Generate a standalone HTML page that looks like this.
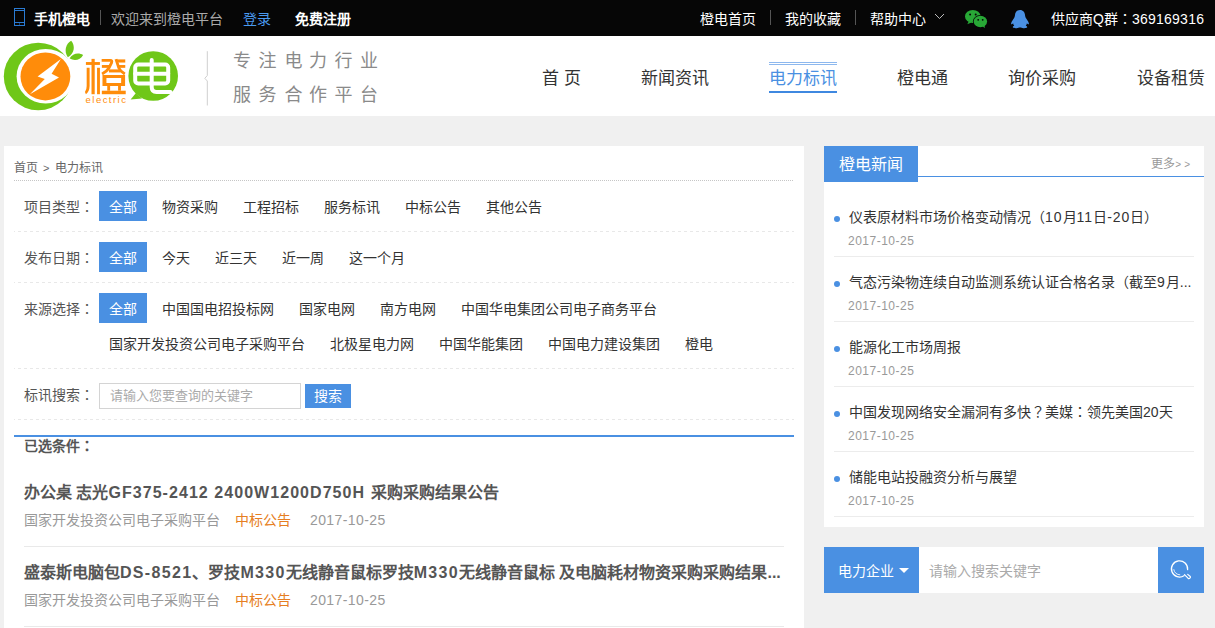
<!DOCTYPE html>
<html lang="zh-CN">
<head>
<meta charset="utf-8">
<title>电力标讯 - 橙电平台</title>
<style>
*{margin:0;padding:0;box-sizing:border-box;}
html,body{width:1215px;height:628px;overflow:hidden;background:#f0f0f0;}
body{font-family:"Liberation Sans",sans-serif;font-size:14px;color:#333;position:relative;}
a{text-decoration:none;color:inherit;}
ul{list-style:none;}
.abs{position:absolute;white-space:nowrap;}

/* top bar */
#topbar{position:absolute;left:0;top:0;width:1215px;height:36px;background:#060606;color:#fff;font-size:14px;line-height:38px;overflow:hidden;}
#topbar .abs{top:0;height:36px;}
#topbar .sep{position:absolute;top:10px;width:1px;height:15px;background:#555;}

/* header */
#header{position:absolute;left:0;top:36px;width:1215px;height:80px;background:#fff;}
#nav a{position:absolute;top:28px;height:30px;line-height:30px;font-size:17px;color:#333;white-space:nowrap;}
#nav a.on{color:#4a90e2;}
#nav .tline{position:absolute;left:769px;top:26px;width:68px;height:3px;border-top:1px solid #8db8ee;border-bottom:1px solid #8db8ee;}
#nav .bline{position:absolute;left:769px;top:55px;width:68px;height:2px;background:#3f88e0;}

/* left panel */
#left{position:absolute;left:4px;top:146px;width:800px;height:482px;background:#fff;}
#crumb{position:absolute;left:10px;top:13px;font-size:12px;line-height:18px;color:#666;white-space:nowrap;}
#crumbline{position:absolute;left:10px;top:34px;width:780px;height:1px;background:repeating-linear-gradient(90deg,#c6c6c6 0,#c6c6c6 1px,transparent 1px,transparent 2px);}
.frow{position:absolute;left:10px;width:780px;}
.frow:after{content:"";position:absolute;left:0;bottom:0;width:780px;height:1px;background:repeating-linear-gradient(90deg,#e8e8e8 0,#e8e8e8 3px,transparent 3px,transparent 6px);background-position:4px 0;}
.frow .lab{position:absolute;left:10px;top:10px;height:30px;line-height:32px;font-size:14px;color:#555;white-space:nowrap;}
.frow .it{position:absolute;height:30px;line-height:32px;font-size:14px;color:#333;white-space:nowrap;}
.frow .it.on{background:#4a90e2;color:#fff;width:48px;text-align:center;}
#kw{position:absolute;left:85px;top:14px;width:202px;height:26px;border:1px solid #d4d4d4;background:#fff;font-size:13px;line-height:24px;color:#aaa;padding-left:10px;white-space:nowrap;}
#kwbtn{position:absolute;left:291px;top:15px;width:46px;height:24px;background:#4a90e2;color:#fff;font-size:14px;line-height:24px;text-align:center;}
#blueline{position:absolute;left:10px;top:289px;width:780px;height:2px;background:#4a90e2;}
#chosen{position:absolute;left:20px;top:290px;font-size:14px;font-weight:bold;color:#555;line-height:20px;white-space:nowrap;}
.item{position:absolute;left:20px;width:760px;height:80px;border-bottom:1px solid #e9e9e9;}
.item .t{position:absolute;left:0;top:14px;font-size:16px;font-weight:bold;color:#555;line-height:24px;white-space:nowrap;}
.item .m{position:absolute;left:0;top:43px;font-size:14px;color:#999;line-height:20px;white-space:nowrap;}
.item .t .l{letter-spacing:1.05px;}
.item .t2 .l{letter-spacing:1.32px;}
.nitem .t .l{letter-spacing:1px;}
.item .m .d{letter-spacing:.4px;}
.nitem .d{letter-spacing:.5px;}
.item .m .c{color:#e67e22;margin-left:15px;}
.item .m .d{margin-left:19px;}

/* right panel */
#news{position:absolute;left:824px;top:146px;width:380px;height:381px;background:#fff;}
#news .hd{position:absolute;left:0;top:0;width:94px;height:36px;background:#4a90e2;color:#fff;font-size:16px;line-height:38px;text-align:center;}
#news .hl{position:absolute;left:94px;top:30px;width:286px;height:1px;background:#4a90e2;}
#news .more{position:absolute;right:11px;top:9px;font-size:12px;line-height:18px;color:#999;white-space:nowrap;}
.nitem{position:absolute;left:10px;width:360px;height:65px;border-bottom:1px solid #ececec;}
.nitem i{position:absolute;left:0px;top:24px;width:6px;height:6px;border-radius:50%;background:#4a90e2;}
.nitem .t{position:absolute;left:15px;top:14px;font-size:14px;line-height:22px;color:#333;white-space:nowrap;}
.nitem .d{position:absolute;left:14px;top:40px;font-size:12px;line-height:18px;color:#999;white-space:nowrap;}

#rsearch{position:absolute;left:824px;top:547px;width:380px;height:46px;background:#fff;}
#rsearch .sel{position:absolute;left:0;top:0;width:95px;height:46px;background:#4a90e2;color:#fff;font-size:14px;line-height:48px;padding-left:14px;white-space:nowrap;}
#rsearch .tri{position:absolute;left:75px;top:21px;width:0;height:0;border-left:5px solid transparent;border-right:5px solid transparent;border-top:5px solid #fff;}
#rsearch .ph{position:absolute;left:105px;top:0;font-size:14px;line-height:48px;color:#aaa;white-space:nowrap;}
#rsearch .btn{position:absolute;right:0;top:0;width:46px;height:46px;background:#4a90e2;}
</style>
</head>
<body>

<div id="topbar">
  <svg class="abs" style="left:13px;top:7px;width:14px;height:20px" viewBox="0 0 14 20"><rect x="1.5" y="1.5" width="10" height="17" fill="none" stroke="#2a7bd3" stroke-width="1"/><line x1="1.5" y1="3.5" x2="11.5" y2="3.5" stroke="#2a7bd3" stroke-width="1"/><line x1="1.5" y1="15.5" x2="11.5" y2="15.5" stroke="#2a7bd3" stroke-width="1"/><rect x="6" y="16.5" width="1" height="1" fill="#2a7bd3"/></svg>
  <a class="abs" style="left:34px;font-weight:bold">手机橙电</a>
  <span class="sep" style="left:100px"></span>
  <span class="abs" style="left:111px;color:#aaa">欢迎来到橙电平台</span>
  <a class="abs" style="left:243px;color:#4a9af0">登录</a>
  <a class="abs" style="left:295px;font-weight:bold">免费注册</a>
  <a class="abs" style="left:700px">橙电首页</a>
  <span class="sep" style="left:770px"></span>
  <a class="abs" style="left:785px">我的收藏</a>
  <span class="sep" style="left:855px"></span>
  <a class="abs" style="left:870px">帮助中心</a>
  <svg class="abs" style="left:934px;top:13px;width:12px;height:8px" viewBox="0 0 12 8"><path d="M1 1 L5.5 5.5 L10 1" fill="none" stroke="#bbb" stroke-width="1"/></svg>
  <svg class="abs" style="left:955px;top:4px;width:84px;height:28px" viewBox="955 4 84 28">
    <ellipse cx="972.8" cy="16.4" rx="7.8" ry="6.5" fill="#28a836"/>
    <path d="M968.8 21.3 L967.3 24.3 L971.5 22.6 Z" fill="#28a836"/>
    <ellipse cx="980.4" cy="21.5" rx="7.5" ry="6.5" fill="#060606"/>
    <ellipse cx="980.4" cy="21.5" rx="6.7" ry="5.7" fill="#28a836"/>
    <path d="M982.5 26.6 L984.9 28 L984.6 25.6 Z" fill="#28a836"/>
    <circle cx="970.1" cy="14.4" r="1" fill="#060606"/><circle cx="975.7" cy="14.4" r="1" fill="#060606"/>
    <circle cx="978.2" cy="19.8" r="0.9" fill="#060606"/><circle cx="982.7" cy="19.8" r="0.9" fill="#060606"/>
    <path fill="#4a90e2" d="M1020 9.9 C1023.2 9.9 1024.8 12.3 1025 15 C1025.1 16.5 1025.6 17.6 1026.4 18.8 C1027.8 20.8 1029 22.6 1028.9 24 C1028.8 24.8 1027.8 24.2 1026.9 23.2 C1026.8 24.3 1026.3 25.2 1025.7 25.8 C1027 26.3 1027.6 27 1027 27.6 C1026 28.4 1022.5 28.4 1020.8 27.4 L1019.2 27.4 C1017.5 28.4 1014 28.4 1013 27.6 C1012.4 27 1013 26.3 1014.3 25.8 C1013.7 25.2 1013.2 24.3 1013.1 23.2 C1012.2 24.2 1011.2 24.8 1011.1 24 C1011 22.6 1012.2 20.8 1013.6 18.8 C1014.4 17.6 1014.9 16.5 1015 15 C1015.2 12.3 1016.8 9.9 1020 9.9 Z"/>
  </svg>
  <span class="abs" style="left:1051px">供应商Q群<span lang="zh-TW">：</span><span style="letter-spacing:.25px">369169316</span></span>
</div>

<div id="header">
  <svg id="logo" style="position:absolute;left:0;top:0" width="400" height="80" viewBox="0 0 400 80">
    <!-- emblem -->
    <ellipse cx="38.2" cy="40.5" rx="34.4" ry="33.7" fill="#6fc718"/>
    <ellipse cx="45.7" cy="40.3" rx="29.1" ry="27.3" fill="#fff"/>
    <ellipse cx="45.4" cy="40.45" rx="24.9" ry="24" fill="#ff8c0a"/>
    <path d="M60.9 22.9 L37.6 40.5 L44.8 43.1 L29.9 58.3 L59 41.4 L51.6 37.8 Z" fill="#fff"/>
    <path d="M67.8 21.3 C63.5 15 66 7.5 71.2 4.8 C75.5 10 74.5 17.5 67.8 21.3 Z" fill="#6fc718"/>
    <path d="M69.6 22.3 C72.5 17 79 16.2 83.1 18.9 C80.5 23.8 74.5 25.5 69.6 22.3 Z" fill="#6fc718"/>
    <!-- cheng -->
    <g transform="translate(84,20) scale(0.0637)" fill="#ff8c0a">
      <rect x="30" y="95" width="220" height="45"/><rect x="118" y="45" width="50" height="555"/>
      <path d="M42 185 H88 V470 Q85 560 30 600 L15 565 Q42 530 42 470 Z"/><rect x="205" y="185" width="45" height="415"/>
      <path fill-rule="evenodd" d="M290 300 H645 V470 H290 Z M352 345 V425 H583 V345 Z"/>
      <rect x="365" y="470" width="45" height="75"/><rect x="535" y="470" width="45" height="75"/>
      <rect x="280" y="545" width="375" height="55"/>
    </g>
    <g transform="translate(100,20) scale(0.04142)" fill="none" stroke="#ff8c0a" stroke-width="68">
      <path d="M40 104 H250 Q300 104 280 160 L215 290 Q170 370 50 435"/>
      <path d="M45 252 H230"/>
      <path d="M385 75 L455 290 Q490 370 600 435"/>
      <path d="M395 120 H610" stroke-width="76"/>
      <path d="M445 252 H610"/>
      <path d="M215 360 H490" stroke-width="74"/>
    </g>
    <text x="85.6" y="67.3" font-family="Liberation Sans, sans-serif" font-size="9.5" fill="#ff8c0a" textLength="40.3" lengthAdjust="spacing">electric</text>
    <!-- bubble -->
    <circle cx="153.2" cy="40" r="24.8" fill="#6fc718"/>
    <path d="M135.8 57.2 L130.6 63.4 L142 62.5 Z" fill="#6fc718"/>
    <g fill="none" stroke="#fff" stroke-width="4" stroke-linecap="round" stroke-linejoin="round">
      <rect x="135.2" y="28.6" width="33" height="18.8" rx="3"/>
      <path d="M135.2 37.7 H168.2"/>
      <path d="M151.7 24 V51 Q151.7 55.9 156.5 55.9 H170.5"/>
    </g>
    <!-- bracket -->
    <path d="M207.3 15.2 V39.5 L204.8 42.3 L207.3 45 V69.5" fill="none" stroke="#cfcfcf" stroke-width="1"/>
    <!-- slogan -->
    <text x="233 258.5 284.5 309 334.5 360" y="30.5" font-family="'Liberation Sans','Noto Sans CJK SC',sans-serif" font-size="18" fill="#8a8a8a">专注电力行业</text>
    <text x="233 258.5 284.5 309 334.5 360" y="65" font-family="'Liberation Sans','Noto Sans CJK SC',sans-serif" font-size="18" fill="#8a8a8a">服务合作平台</text>
  </svg>
  <div id="nav">
    <a style="left:542px">首 页</a>
    <a style="left:641px">新闻资讯</a>
    <a class="on" style="left:769px">电力标讯</a>
    <a style="left:897px">橙电通</a>
    <a style="left:1008px">询价采购</a>
    <a style="left:1137px">设备租赁</a>
    <span class="tline"></span><span class="bline"></span>
  </div>
</div>

<div id="left">
  <div id="crumb">首页<span style="margin:0 6px 0 5px;font-size:11px">&gt;</span>电力标讯</div>
  <div id="crumbline"></div>

  <div class="frow" style="top:35px;height:51px">
    <span class="lab">项目类型<span lang="zh-TW">：</span></span>
    <a class="it on" style="left:85px;top:10px">全部</a>
    <a class="it" style="left:148px;top:10px">物资采购</a>
    <a class="it" style="left:229px;top:10px">工程招标</a>
    <a class="it" style="left:310px;top:10px">服务标讯</a>
    <a class="it" style="left:391px;top:10px">中标公告</a>
    <a class="it" style="left:472px;top:10px">其他公告</a>
  </div>
  <div class="frow" style="top:86px;height:51px">
    <span class="lab">发布日期<span lang="zh-TW">：</span></span>
    <a class="it on" style="left:85px;top:10px">全部</a>
    <a class="it" style="left:148px;top:10px">今天</a>
    <a class="it" style="left:201px;top:10px">近三天</a>
    <a class="it" style="left:268px;top:10px">近一周</a>
    <a class="it" style="left:335px;top:10px">这一个月</a>
  </div>
  <div class="frow" style="top:137px;height:86px">
    <span class="lab">来源选择<span lang="zh-TW">：</span></span>
    <a class="it on" style="left:85px;top:10px">全部</a>
    <a class="it" style="left:148px;top:10px">中国国电招投标网</a>
    <a class="it" style="left:285px;top:10px">国家电网</a>
    <a class="it" style="left:366px;top:10px">南方电网</a>
    <a class="it" style="left:447px;top:10px">中国华电集团公司电子商务平台</a>
    <a class="it" style="left:95px;top:45px">国家开发投资公司电子采购平台</a>
    <a class="it" style="left:316px;top:45px">北极星电力网</a>
    <a class="it" style="left:425px;top:45px">中国华能集团</a>
    <a class="it" style="left:534px;top:45px">中国电力建设集团</a>
    <a class="it" style="left:671px;top:45px">橙电</a>
  </div>
  <div class="frow" style="top:223px;height:51px">
    <span class="lab" style="top:10px">标讯搜索<span lang="zh-TW">：</span></span>
    <div id="kw">请输入您要查询的关键字</div>
    <div id="kwbtn">搜索</div>
  </div>

  <div id="blueline"></div>
  <div id="chosen">已选条件<span lang="zh-TW">：</span></div>

  <div class="item" style="top:321px">
    <div class="t">办公桌 志光<span class="l">GF375-2412 2400W1200D750H </span>采购采购结果公告</div>
    <div class="m">国家开发投资公司电子采购平台<span class="c">中标公告</span><span class="d">2017-10-25</span></div>
  </div>
  <div class="item" style="top:401px">
    <div class="t t2">盛泰斯电脑包<span class="l">DS-8521</span>、罗技<span class="l">M330</span>无线静音鼠标罗技<span class="l">M330</span>无线静音鼠标 及电脑耗材物资采购采购结果...</div>
    <div class="m">国家开发投资公司电子采购平台<span class="c">中标公告</span><span class="d">2017-10-25</span></div>
  </div>
</div>

<div id="news">
  <div class="hd">橙电新闻</div>
  <div class="hl"></div>
  <a class="more">更多<span style="font-size:10px;letter-spacing:3px">&gt;&gt;</span></a>
  <div class="nitem" style="top:46px"><i></i><div class="t">仪表原材料市场价格变动情况（<span class="l">10</span>月<span class="l">11</span>日<span class="l">-20</span>日）</div><div class="d">2017-10-25</div></div>
  <div class="nitem" style="top:111px"><i></i><div class="t">气态污染物连续自动监测系统认证合格名录（截至<span class="l">9</span>月...</div><div class="d">2017-10-25</div></div>
  <div class="nitem" style="top:176px"><i></i><div class="t">能源化工市场周报</div><div class="d">2017-10-25</div></div>
  <div class="nitem" style="top:241px"><i></i><div class="t">中国发现网络安全漏洞有多快<span lang="zh-TW">？</span>美媒<span lang="zh-TW">：</span>领先美国20天</div><div class="d">2017-10-25</div></div>
  <div class="nitem" style="top:306px"><i></i><div class="t">储能电站投融资分析与展望</div><div class="d">2017-10-25</div></div>
</div>

<div id="rsearch">
  <div class="sel">电力企业</div><span class="tri"></span>
  <div class="ph">请输入搜索关键字</div>
  <div class="btn"><svg width="46" height="46" viewBox="0 0 46 46" fill="none" stroke="#fff" stroke-linecap="round"><path d="M29.6 22.6 A8.1 8.1 0 1 0 26 28.7" stroke-width="1.3"/><path d="M15.8 22.6 A5.8 5.8 0 0 0 21.8 27.8" stroke-width="1" opacity=".85"/><path d="M26.5 27.7 L30 31.2 Q31 32 31.9 31.1 Q33 30 32 29.2 L29.7 27.4" stroke-width="1.2" stroke-linejoin="round"/></svg></div>
</div>

</body>
</html>
